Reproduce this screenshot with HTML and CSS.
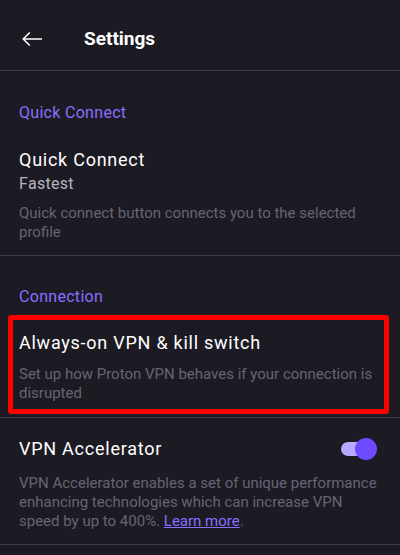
FILE: index.html
```html
<!DOCTYPE html>
<html lang="en">
<head>
  <meta charset="UTF-8" />
  <meta name="viewport" content="width=device-width, initial-scale=1.0"/>
  <title>Settings</title>
  <link rel="stylesheet" href="styles.css">
</head>
<body>

  <header class="topbar">
    <button class="back-button" aria-label="Back">
      <svg width="20" height="14" viewBox="0 0 20 14" fill="none" stroke="#ffffff" stroke-width="1.5">
        <path d="M20 7H1.2" />
        <path d="M7.8 0.5L1.2 7L7.8 13.5" />
      </svg>
    </button>
    <h1>Settings</h1>
  </header>

  <section class="section first">
    <h2 class="section-label">Quick Connect</h2>
    <div class="item">
      <div class="item-title">Quick Connect</div>
      <div class="item-value">Fastest</div>
      <p class="item-desc">Quick connect button connects you to the selected profile</p>
    </div>
  </section>

  <section class="section">
    <h2 class="section-label">Connection</h2>
    <div class="item highlighted">
      <div class="item-title">Always-on VPN &amp; kill switch</div>
      <p class="item-desc">Set up how Proton VPN behaves if your connection is disrupted</p>
    </div>
  </section>

  <section class="section no-label">
    <div class="item">
      <div class="item-row">
        <div class="item-title">VPN Accelerator</div>
        <span class="toggle on"><span class="thumb"></span></span>
      </div>
      <p class="item-desc spaced">VPN Accelerator enables a set of unique performance enhancing technologies which can increase VPN speed by up to 400%. <a href="#" class="learn-more">Learn more</a>.</p>
    </div>
  </section>

</body>
</html>
```

FILE: styles.css
```css
body {
  font-family: Roboto, "Noto Sans", Arial, sans-serif;
  background-color: #1c1b24; /* proton dark */
  color: white;
  margin: 0;
  width: 400px;
  height: 555px;
  overflow: hidden;
}
.topbar {
  display: flex;
  align-items: center;
  height: 71px;
  padding-top: 7px;
  box-sizing: border-box;
  border-bottom: 1px solid #3d3b48;
}
.back-button {
  background: none;
  border: none;
  padding: 0;
  margin-left: 22px;
  width: 20px;
  height: 14px;
  display: flex;
}
.topbar h1 {
  margin: 0 0 0 42px;
  font-size: 19px;
  font-weight: 700;
}
.section {
  border-bottom: 1px solid #3d3b48;
  padding-top: 31px;
}
.section.first {
  padding-top: 32px;
}
.section.no-label {
  padding-top: 19px;
}
.section-label {
  margin: 0 19px 11px;
  font-size: 16px;
  font-weight: 400;
  line-height: 20px;
  letter-spacing: 0.3px;
  color: #8a6eff;
}
.item {
  padding: 14px 16px 13px 19px;
}
.no-label .item {
  padding-top: 0;
  padding-bottom: 13px;
}
.item-row {
  display: flex;
  align-items: center;
  justify-content: space-between;
}
.item-title {
  font-size: 18px;
  line-height: 24px;
  letter-spacing: 0.75px;
}
.item-value {
  font-size: 16px;
  line-height: 22px;
  letter-spacing: 0.3px;
  color: #b7b5c2;
  margin-top: 1px;
}
.item-desc {
  margin: 9px 0 0;
  font-size: 15px;
  line-height: 19px;
  color: #676474;
}
.item-desc.spaced {
  margin-top: 13px;
}
.highlighted {
  margin: -3px 11px 3px 8px;
  padding: 11px 2px 6px 6px;
  border: 5px solid #ff0000;
  border-radius: 3px;
}
.highlighted .item-desc {
  margin-top: 10px;
}
.toggle {
  position: relative;
  width: 30px;
  height: 14px;
  margin-right: 13px;
  border-radius: 7px;
  background-color: #b7a9ff;
}
.toggle .thumb {
  position: absolute;
  right: -6px;
  top: -4px;
  width: 22px;
  height: 22px;
  border-radius: 50%;
  background-color: #6d4aff;
}
.learn-more {
  color: #8a6eff;
}
```
